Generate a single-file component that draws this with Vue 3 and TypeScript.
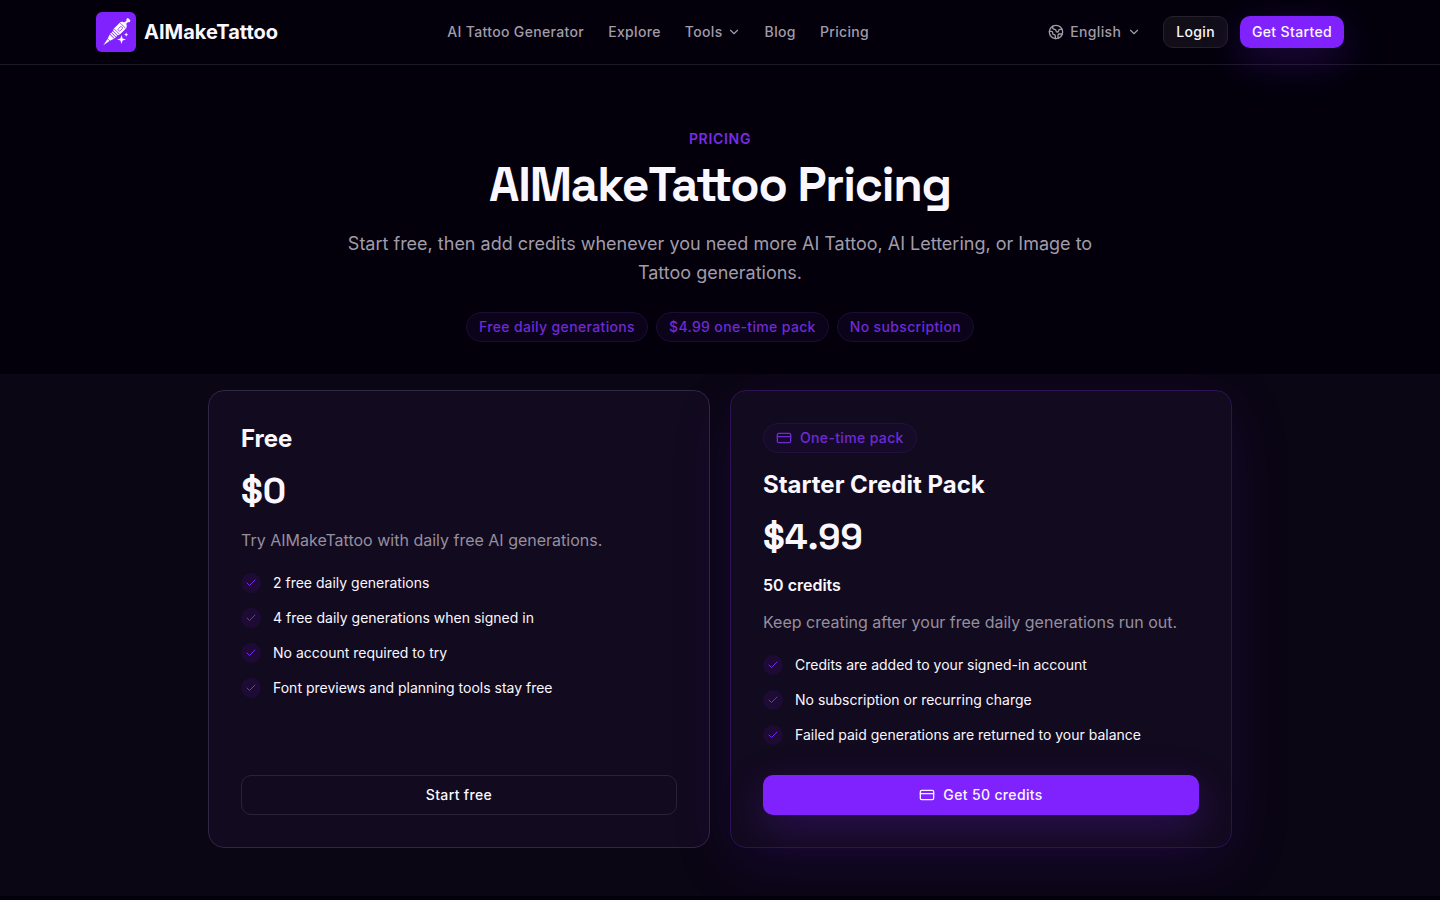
<script setup lang="ts">
interface Plan {
  name: string
  price: string
  credits?: string
  badge?: string
  summary: string
  features: string[]
  action: string
  featured: boolean
}

const highlights: string[] = ['Free daily generations', '$4.99 one-time pack', 'No subscription']

const plans: Plan[] = [
  {
    name: 'Free',
    price: '$0',
    summary: 'Try AIMakeTattoo with daily free AI generations.',
    features: [
      '2 free daily generations',
      '4 free daily generations when signed in',
      'No account required to try',
      'Font previews and planning tools stay free',
    ],
    action: 'Start free',
    featured: false,
  },
  {
    name: 'Starter Credit Pack',
    price: '$4.99',
    credits: '50 credits',
    badge: 'One-time pack',
    summary: 'Keep creating after your free daily generations run out.',
    features: [
      'Credits are added to your signed-in account',
      'No subscription or recurring charge',
      'Failed paid generations are returned to your balance',
    ],
    action: 'Get 50 credits',
    featured: true,
  },
]
</script>

<template>
  <div class="page">
    <header class="header">
      <div class="bar">
        <a class="brand" href="#">
          <svg class="logo" viewBox="0 0 40 40" aria-hidden="true">
            <rect width="40" height="40" rx="6" fill="#7f22fe" />
            <g transform="translate(7.3 33.2) rotate(45) scale(1.05)" fill="#fff">
              <path d="M0 0L-1.3 -7H1.3Z" />
              <path d="M-1.6 -7.5H1.6L2.9 -11.5H-2.9Z" />
              <path d="M-3.1 -12.2H3.1V-13.6H-3.1Z" />
              <path d="M-3.1 -14.3H3.1V-15.7H-3.1Z" />
              <path d="M-3.1 -16.4H3.1L4 -18V-27.2L2.6 -29H-2.6L-4 -27.2V-18Z" />
              <rect x="-1.8" y="-29.8" width="3.6" height="1.2" />
              <rect x="-1" y="-33" width="2" height="3.4" />
              <rect x="-2" y="-35" width="4" height="2.6" rx="1" />
              <g fill="none" stroke="#7f22fe" stroke-width=".7">
                <path d="M-4 -18.3H4M-4 -26.4H4" />
                <rect x="-.9" y="-24.8" width="2.6" height="4.6" rx="1" />
              </g>
            </g>
            <path d="M25.5 23L26.6 26.4L30 27.5L26.6 28.6L25.5 32L24.4 28.6L21 27.5L24.4 26.4Z" fill="#fff" />
            <path d="M30.2 20.5L30.8 22L32.3 22.6L30.8 23.2L30.2 24.7L29.6 23.2L28.1 22.6L29.6 22Z" fill="#fff" />
          </svg>
          <span>AIMakeTattoo</span>
        </a>

        <nav class="nav" aria-label="Main">
          <a href="#">AI Tattoo Generator</a>
          <a href="#">Explore</a>
          <button type="button" class="menu">
            Tools
            <svg class="icon chevron" viewBox="0 0 24 24" aria-hidden="true"><path d="m6 9 6 6 6-6" /></svg>
          </button>
          <a href="#">Blog</a>
          <a href="#">Pricing</a>
        </nav>

        <div class="actions">
          <button type="button" class="menu language">
            <svg class="icon" viewBox="0 0 24 24" aria-hidden="true">
              <circle cx="12" cy="12" r="10" />
              <path d="M21.54 15H17a2 2 0 0 0-2 2v4.54M7 3.34V5a3 3 0 0 0 3 3 2 2 0 0 1 2 2c0 1.1.9 2 2 2a2 2 0 0 0 2-2c0-1.1.9-2 2-2h3.17M11 21.95V18a2 2 0 0 0-2-2 2 2 0 0 1-2-2v-1a2 2 0 0 0-2-2H2.05" />
            </svg>
            English
            <svg class="icon chevron" viewBox="0 0 24 24" aria-hidden="true"><path d="m6 9 6 6 6-6" /></svg>
          </button>
          <a class="button small ghost" href="#">Login</a>
          <a class="button small primary" href="#">Get Started</a>
        </div>
      </div>
    </header>

    <main>
      <section class="hero">
        <p class="eyebrow">PRICING</p>
        <h1>AIMakeTattoo Pricing</h1>
        <p class="lead">
          Start free, then add credits whenever you need more AI Tattoo, AI Lettering, or Image to Tattoo generations.
        </p>
        <ul class="pills">
          <li v-for="item in highlights" :key="item" class="pill">{{ item }}</li>
        </ul>
      </section>

      <section class="plans">
        <div class="grid">
          <article v-for="plan in plans" :key="plan.name" class="card" :class="{ featured: plan.featured }">
            <span v-if="plan.badge" class="pill badge">
              <svg class="icon" viewBox="0 0 24 24" aria-hidden="true">
                <rect x="2" y="5" width="20" height="14" rx="2" /><path d="M2 10h20" />
              </svg>
              {{ plan.badge }}
            </span>
            <h2>{{ plan.name }}</h2>
            <p class="price">{{ plan.price }}</p>
            <p v-if="plan.credits" class="credits">{{ plan.credits }}</p>
            <p class="summary">{{ plan.summary }}</p>
            <ul class="features">
              <li v-for="feature in plan.features" :key="feature">
                <span class="tick">
                  <svg viewBox="0 0 24 24" aria-hidden="true"><path d="M20 6 9 17l-5-5" /></svg>
                </span>
                {{ feature }}
              </li>
            </ul>
            <button type="button" class="button large" :class="plan.featured ? 'primary' : 'outline'">
              <svg v-if="plan.featured" class="icon" viewBox="0 0 24 24" aria-hidden="true">
                <rect x="2" y="5" width="20" height="14" rx="2" /><path d="M2 10h20" />
              </svg>
              {{ plan.action }}
            </button>
          </article>
        </div>
      </section>
    </main>
  </div>
</template>

<style>
body {
  margin: 0;
  background: #03000b;
}
</style>

<style scoped>
.page {
  min-height: 100vh;
  background: #03000b;
  color: #faf7ff;
  font-family: Inter, "Liberation Sans", sans-serif;
  font-size: 16px;
  line-height: 24px;
}

h1,
h2,
p,
ul {
  margin: 0;
  padding: 0;
}

ul {
  list-style: none;
}

a {
  color: inherit;
  text-decoration: none;
}

button {
  font: inherit;
  letter-spacing: inherit;
  cursor: pointer;
}

.icon {
  width: 16px;
  height: 16px;
  flex: none;
  fill: none;
  stroke: currentColor;
  stroke-width: 2;
  stroke-linecap: round;
  stroke-linejoin: round;
}

.header {
  position: relative;
  border-bottom: 1px solid #1c1825;
}

.bar {
  box-sizing: border-box;
  max-width: 1280px;
  height: 64px;
  margin: 0 auto;
  padding: 0 16px;
  display: flex;
  align-items: center;
  justify-content: space-between;
}

.brand {
  display: flex;
  align-items: center;
  gap: 8px;
  font-size: 20px;
  line-height: 28px;
  font-weight: 700;
}

.logo {
  width: 40px;
  height: 40px;
}

.nav,
.actions {
  display: flex;
  align-items: center;
  font-size: 14px;
  line-height: 20px;
  font-weight: 500;
  letter-spacing: 0.025em;
}

.nav {
  gap: 24px;
  color: #a19ca9;
}

.actions {
  gap: 12px;
}

.menu {
  display: flex;
  align-items: center;
  gap: 4px;
  padding: 0;
  border: 0;
  background: none;
  color: #a19ca9;
}

.chevron {
  width: 14px;
  height: 14px;
}

.language {
  gap: 6px;
  padding: 6px 10px;
}

.button {
  box-sizing: border-box;
  display: inline-flex;
  align-items: center;
  justify-content: center;
  gap: 8px;
  padding: 0 12px;
  border: 0;
  border-radius: 10px;
  color: #faf7ff;
  font-size: 14px;
  line-height: 20px;
  font-weight: 500;
  letter-spacing: 0.025em;
}

.small {
  height: 32px;
}

.large {
  height: 40px;
  width: 100%;
  margin-top: auto;
}

.ghost {
  border: 1px solid #25212d;
  background: #110e18;
}

.outline {
  border: 1px solid #2a2336;
  background: transparent;
}

.primary {
  background: #7f22fe;
  box-shadow: 0 12px 40px rgba(127, 34, 254, 0.25);
}

.hero {
  display: flex;
  flex-direction: column;
  align-items: center;
  padding: 64px 16px 32px;
  text-align: center;
}

.eyebrow {
  color: #7a2bea;
  font-size: 14px;
  line-height: 20px;
  font-weight: 600;
  letter-spacing: 0.05em;
}

h1 {
  margin-top: 12px;
  font-family: "Space Grotesk", Inter, sans-serif;
  font-size: 48px;
  line-height: 48px;
  font-weight: 700;
  letter-spacing: -0.025em;
}

.lead {
  max-width: 768px;
  margin-top: 20px;
  color: #a19ca9;
  font-size: 18px;
  line-height: 29px;
}

.pills {
  display: flex;
  flex-wrap: wrap;
  justify-content: center;
  gap: 8px;
  margin-top: 25px;
}

.pill {
  display: inline-flex;
  align-items: center;
  gap: 8px;
  padding: 4px 12px;
  border: 1px solid #1d0d36;
  border-radius: 999px;
  background: #0b0319;
  color: #6f2ad6;
  font-size: 14px;
  line-height: 20px;
  font-weight: 500;
  letter-spacing: 0.025em;
}

.plans {
  overflow: hidden;
  padding: 16px 16px 48px;
  background: #0a0613;
}

.grid {
  display: grid;
  grid-template-columns: repeat(2, minmax(0, 1fr));
  gap: 20px;
  max-width: 1024px;
  margin: 0 auto;
}

.card {
  display: flex;
  flex-direction: column;
  align-items: flex-start;
  padding: 32px;
  border: 1px solid #2f2745;
  border-radius: 16px;
  background: #120a1e;
}

.featured {
  border-color: #2f1254;
  box-shadow: 0 16px 64px rgba(127, 34, 254, 0.12);
}

.badge {
  margin-bottom: 16px;
  border-color: #23113d;
  background: #160a29;
}

h2 {
  font-size: 24px;
  line-height: 32px;
  font-weight: 700;
}

.price {
  margin-top: 16px;
  font-family: "Space Grotesk", Inter, sans-serif;
  font-size: 36px;
  line-height: 40px;
  font-weight: 700;
}

.credits {
  margin-top: 16px;
  font-weight: 600;
}

.summary {
  margin-top: 12px;
  color: #968f9f;
  line-height: 26px;
}

.price + .summary {
  margin-top: 16px;
}

.features {
  display: grid;
  gap: 12px;
  margin: 18px 0 29px;
  font-size: 14px;
  line-height: 23px;
}

.features li {
  display: flex;
  align-items: flex-start;
  gap: 12px;
}

.tick {
  display: grid;
  place-items: center;
  flex: none;
  width: 20px;
  height: 20px;
  margin-top: 2px;
  border-radius: 50%;
  background: #1d0b36;
}

.tick svg {
  width: 12px;
  height: 12px;
  fill: none;
  stroke: #7a2bea;
  stroke-width: 2;
  stroke-linecap: round;
  stroke-linejoin: round;
}

@media (max-width: 900px) {
  .nav {
    display: none;
  }

  .grid {
    grid-template-columns: minmax(0, 1fr);
  }
}
</style>
